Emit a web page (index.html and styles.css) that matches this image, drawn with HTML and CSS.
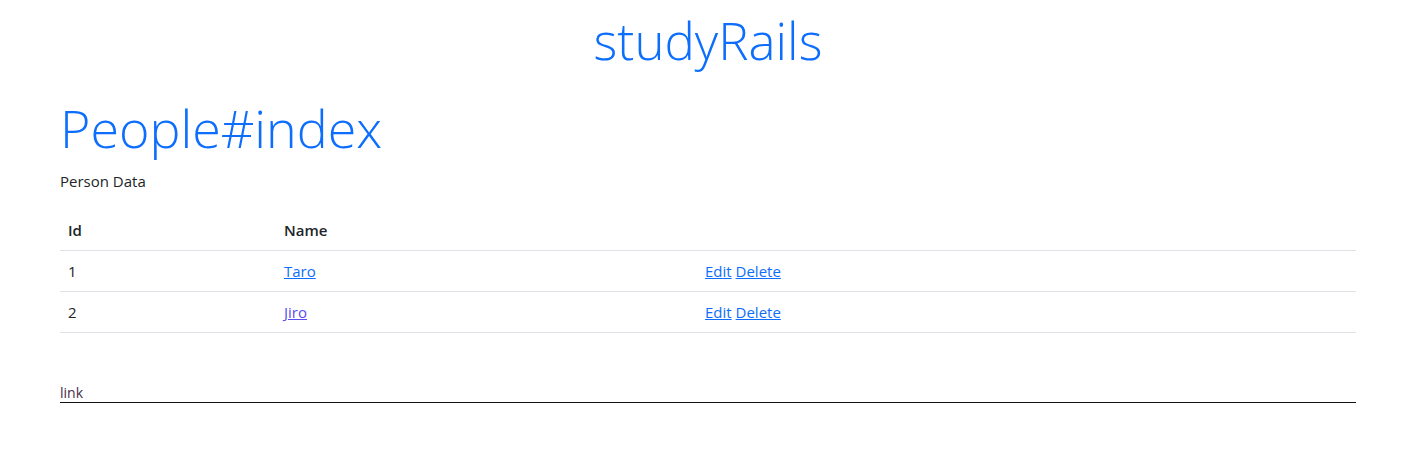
FILE: index.html
```html
<!DOCTYPE html>
<html lang="ja">
<head>
<meta charset="utf-8">
<title>studyRails</title>
<link rel="stylesheet" href="styles.css">
</head>
<body>
<div class="page">
  <header class="site-header">
    <h1 class="brand">studyRails</h1>
  </header>
  <main class="content">
    <h1 class="page-title">People#index</h1>
    <p class="intro">Person Data</p>
    <table class="data-table">
      <thead>
        <tr><th class="col-id">Id</th><th class="col-name">Name</th><th class="col-actions"></th></tr>
      </thead>
      <tbody>
        <tr><td>1</td><td><a href="#">Taro</a></td><td><a href="#">Edit</a> <a href="#">Delete</a></td></tr>
        <tr><td>2</td><td><a href="#" class="visited">Jiro</a></td><td><a href="#">Edit</a> <a href="#">Delete</a></td></tr>
      </tbody>
    </table>
    <div class="footer-link"><span class="link-text">link</span></div>
  </main>
</div>
</body>
</html>
```

FILE: styles.css
```css
* { box-sizing: border-box; }
html, body { margin: 0; padding: 0; background: #fff; }
body {
  font-family: "Open Sans", "Noto Sans", "Liberation Sans", sans-serif;
  font-size: 16px;
  line-height: 1.5;
  color: #212529;
}
.page { padding: 0 46px 0 60px; }
.site-header { padding-top: 10px; }
.brand {
  margin: 0;
  text-align: center;
  font-size: 51px;
  font-weight: 300;
  line-height: 1.2;
  color: #0d6efd;
}
.page-title {
  margin: 26px 0 0;
  font-size: 52px;
  font-weight: 300;
  line-height: 1.2;
  color: #0d6efd;
}
.intro { margin: 10px 0 18px; font-size: 15px; }
a { color: #0d6efd; text-decoration: underline; }
a.visited { color: #5a4cf0; }
.data-table {
  width: 100%;
  border-collapse: collapse;
  margin-bottom: 50px;
  font-size: 15px;
}
.data-table th, .data-table td {
  padding: 8px;
  text-align: left;
  line-height: 24px;
  border-bottom: 1px solid #dee2e6;
}
.data-table th { font-weight: 600; }
.col-id { width: 216px; }
.col-name { width: 421px; }
.footer-link {
  border-bottom: 1px solid #111;
  font-size: 14px;
  line-height: 19px;
}
.link-text { color: #4a2c4a; }
```
